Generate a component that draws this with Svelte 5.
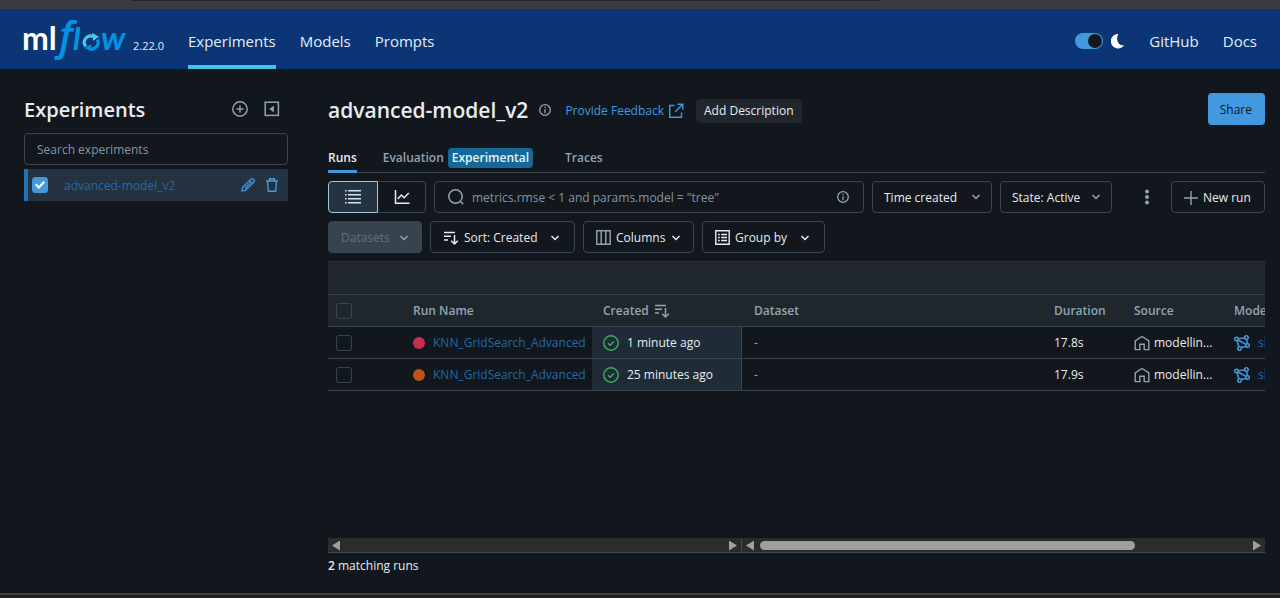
<script>
  let dark = $state(true);
  let experimentChecked = $state(true);
  let view = $state('list');

  const runs = [
    { name: 'KNN_GridSearch_Advanced', color: '#c82c4f', created: '1 minute ago', duration: '17.8s', source: 'modellin...', model: 'sklearn' },
    { name: 'KNN_GridSearch_Advanced', color: '#be501e', created: '25 minutes ago', duration: '17.9s', source: 'modellin...', model: 'sklearn' }
  ];
</script>

{#snippet chevron()}
  <svg class="chevron" width="10" height="10" viewBox="0 0 10 10" aria-hidden="true"><path d="M1.5 3 5 6.5 8.5 3" fill="none" stroke="currentColor" stroke-width="1.5" /></svg>
{/snippet}

{#snippet info()}
  <svg width="14" height="14" viewBox="0 0 14 14" aria-hidden="true"><circle cx="7" cy="7" r="5.3" fill="none" stroke="currentColor" stroke-width="1.3" /><path d="M7 6.2v4M7 3.7v1.4" stroke="currentColor" stroke-width="1.3" /></svg>
{/snippet}

{#snippet sortIcon()}
  <svg width="16" height="16" viewBox="0 0 16 16" fill="none" stroke="currentColor" stroke-width="1.5" aria-hidden="true"><path d="M1 2.5h11M1 6.3h7M1 10h4M11.5 5v9M8.2 10.8l3.3 3.2 3.3-3.2" /></svg>
{/snippet}

<div class="page">
  <div class="window-edge"><div class="address-edge"></div></div>

  <header>
    <a class="brand" href="#home" aria-label="mlflow 2.22.0">
      <svg class="logo" width="105" height="44" viewBox="0 0 105 44" aria-hidden="true">
        <text class="ml" x="-2" y="33">ml</text>
        <text class="f" x="35" y="33">f</text>
        <text class="l" x="49" y="33">l</text>
        <g fill="none" stroke="#43c9ed" stroke-width="3.2">
          <path d="M61.8 29.5A6.4 6.4 0 0 1 69 19.4" />
          <path d="M73.3 22.5A6.4 6.4 0 0 1 65.5 31.6" stroke="#0194e2" />
        </g>
        <path d="M68 15.8 75 19.8 69.2 23.8Z" fill="#43c9ed" />
        <path d="M67.2 27.3 60.8 31 67.4 34.6Z" fill="#0194e2" />
        <text class="w" x="77" y="33">w</text>
      </svg>
      <span class="version">2.22.0</span>
    </a>
    <nav>
      <a class="active" href="#experiments">Experiments</a>
      <a href="#models">Models</a>
      <a href="#prompts">Prompts</a>
    </nav>
    <div class="links">
      <label class="theme">
        <input type="checkbox" role="switch" aria-label="Dark theme" bind:checked={dark} />
        <svg width="14" height="16" viewBox="0 0 14 16" aria-hidden="true"><path d="M7.4 1A7.2 7.2 0 1 0 13 12.2C7.6 13.3 4 6.2 7.4 1Z" fill="#fff" /></svg>
      </label>
      <a href="#github">GitHub</a>
      <a href="#docs">Docs</a>
    </div>
  </header>

  <div class="body">
    <aside>
      <div class="side-title">
        <h2>Experiments</h2>
        <button class="plain" aria-label="New experiment">
          <svg width="16" height="16" viewBox="0 0 16 16" fill="none" stroke="currentColor" stroke-width="1.4" aria-hidden="true"><circle cx="8" cy="8" r="7.2" /><path d="M8 4.5v7M4.5 8h7" /></svg>
        </button>
        <button class="plain" aria-label="Hide sidebar">
          <svg width="16" height="16" viewBox="0 0 16 16" aria-hidden="true"><rect x="1.2" y="1.2" width="13.2" height="13.2" fill="none" stroke="currentColor" stroke-width="1.5" /><path d="M9.8 4.8v6.4L5.2 8Z" fill="currentColor" /></svg>
        </button>
      </div>
      <input class="side-search" type="text" placeholder="Search experiments" aria-label="Search experiments" />
      <div class="experiment">
        <input class="box" type="checkbox" aria-label="Select advanced-model_v2" bind:checked={experimentChecked} />
        <a href="#advanced-model_v2">advanced-model_v2</a>
        <button class="plain" aria-label="Rename">
          <svg width="16" height="16" viewBox="0 0 16 16" fill="none" stroke="currentColor" stroke-width="1.3" aria-hidden="true"><path d="M2 14l.6-3.6 8.3-8.3a1.6 1.6 0 0 1 2.3 0l.6.6a1.6 1.6 0 0 1 0 2.3l-8.3 8.3ZM9.4 3.6l2.9 2.9M4.8 11.2l5.6-5.6" /></svg>
        </button>
        <button class="plain" aria-label="Delete">
          <svg width="16" height="16" viewBox="0 0 16 16" fill="none" stroke="currentColor" stroke-width="1.4" aria-hidden="true"><path d="M2 4h12M5.5 4V1.7h5V4M3.5 4l.8 10.3h7.4L12.5 4" /></svg>
        </button>
      </div>
    </aside>

    <main>
      <div class="title">
        <h1>advanced-model_v2</h1>
        <span class="muted">{@render info()}</span>
        <a class="feedback" href="#feedback">
          Provide Feedback
          <svg width="16" height="16" viewBox="0 0 16 16" fill="none" stroke="currentColor" stroke-width="1.4" aria-hidden="true"><path d="M6.5 2.5H1.7v11.8h11.8V9.5M9.5 1.2h5.2v5.2M14.5 1.4 7 9" /></svg>
        </a>
        <button class="describe">Add Description</button>
        <button class="share">Share</button>
      </div>

      <div class="tabs" role="tablist">
        <button role="tab" class="on" aria-selected="true">Runs</button>
        <button role="tab" aria-selected="false">Evaluation <span class="tag">Experimental</span></button>
        <button role="tab" aria-selected="false">Traces</button>
      </div>

      <div class="bar">
        <div class="views">
          <button class:on={view === 'list'} aria-label="List view" onclick={() => (view = 'list')}>
            <svg width="18" height="14" viewBox="0 0 18 14" fill="currentColor" aria-hidden="true"><path d="M4 0h13v1.5H4zM4 4h13v1.5H4zM4 8h13v1.5H4zM4 12h13v1.5H4zM1 0h1.6v1.5H1zM1 4h1.6v1.5H1zM1 8h1.6v1.5H1zM1 12h1.6v1.5H1z" /></svg>
          </button>
          <button class:on={view === 'chart'} aria-label="Chart view" onclick={() => (view = 'chart')}>
            <svg width="16" height="16" viewBox="0 0 16 16" fill="none" stroke="currentColor" stroke-width="1.5" aria-hidden="true"><path d="M1.5 1v13.2h14M3.8 10l3.5-4 2.8 2.7L14.8 4" /></svg>
          </button>
        </div>
        <div class="query">
          <svg width="18" height="18" viewBox="0 0 18 18" fill="none" stroke="currentColor" stroke-width="1.5" aria-hidden="true"><circle cx="8.5" cy="8.5" r="6.7" /><path d="m13.2 13.2 3 3" /></svg>
          <input type="text" aria-label="Search runs" placeholder={'metrics.rmse < 1 and params.model = "tree"'} />
          {@render info()}
        </div>
        <div class="select time">
          <select aria-label="Time created"><option>Time created</option></select>
          {@render chevron()}
        </div>
        <div class="select state">
          <select aria-label="State"><option>State: Active</option></select>
          {@render chevron()}
        </div>
        <button class="plain more" aria-label="More actions">
          <svg width="6" height="16" viewBox="0 0 6 16" fill="currentColor" aria-hidden="true"><circle cx="3" cy="2.6" r="2" /><circle cx="3" cy="8" r="2" /><circle cx="3" cy="13.4" r="2" /></svg>
        </button>
        <button class="btn new">
          <svg class="muted" width="14" height="14" viewBox="0 0 14 14" stroke="currentColor" stroke-width="1.4" aria-hidden="true"><path d="M7 0v14M0 7h14" /></svg>
          New run
        </button>
      </div>

      <div class="bar second">
        <button class="btn datasets" disabled>Datasets {@render chevron()}</button>
        <button class="btn sort">{@render sortIcon()} Sort: Created {@render chevron()}</button>
        <button class="btn columns">
          <svg class="muted" width="15" height="15" viewBox="0 0 15 15" fill="none" stroke="currentColor" stroke-width="1.4" aria-hidden="true"><path d="M.8.8h13.4v13.4H.8ZM5.2.8v13.4M9.8.8v13.4" /></svg>
          Columns {@render chevron()}
        </button>
        <button class="btn group">
          <svg width="15" height="15" viewBox="0 0 15 15" fill="none" stroke="currentColor" stroke-width="1.4" aria-hidden="true"><path d="M.8.8h13.4v13.4H.8ZM3 4.5h1.8M3 7.5h1.8M3 10.5h1.8M6.2 4.5H12M6.2 7.5H12M6.2 10.5H12" /></svg>
          Group by {@render chevron()}
        </button>
      </div>

      <div class="grid">
        <table>
          <colgroup>
            <col class="c-check" /><col class="c-name" /><col class="c-created" /><col class="c-dataset" />
            <col class="c-duration" /><col class="c-source" /><col class="c-models" />
          </colgroup>
          <thead>
            <tr class="groups"><td colspan="7"></td></tr>
            <tr>
              <th><input class="box" type="checkbox" aria-label="Select all runs" /></th>
              <th>Run Name</th>
              <th><span class="cell">Created {@render sortIcon()}</span></th>
              <th>Dataset</th>
              <th>Duration</th>
              <th>Source</th>
              <th>Models</th>
            </tr>
          </thead>
          <tbody>
            {#each runs as run}
              <tr>
                <td><input class="box" type="checkbox" aria-label="Select run" /></td>
                <td><span class="cell"><i class="dot" style:background={run.color}></i><a href="#run">{run.name}</a></span></td>
                <td class="sorted">
                  <span class="cell">
                    <svg class="ok" width="16" height="16" viewBox="0 0 16 16" fill="none" stroke="currentColor" stroke-width="1.5" aria-hidden="true"><circle cx="8" cy="8" r="7.2" /><path d="m5 8.2 2.2 2.1L11 6.4" /></svg>
                    {run.created}
                  </span>
                </td>
                <td class="muted">-</td>
                <td>{run.duration}</td>
                <td>
                  <span class="cell tight">
                    <svg class="muted" width="16" height="16" viewBox="0 0 16 16" fill="none" stroke="currentColor" stroke-width="1.4" aria-hidden="true"><path d="M1.2 5.8 8 1.5l6.8 4.3v8.8H10.2V9.2H5.8v5.4H1.2Z" /></svg>
                    {run.source}
                  </span>
                </td>
                <td>
                  <span class="cell">
                    <svg class="model" width="16" height="16" viewBox="0 0 16 16" fill="none" stroke="currentColor" stroke-width="1.5" aria-hidden="true"><circle cx="2.4" cy="4" r="1.7" /><circle cx="12.4" cy="2.6" r="1.8" /><circle cx="13.6" cy="10.5" r="1.8" /><circle cx="5.5" cy="13.6" r="1.8" /><path d="M4.2 3.8 10.4 3M3 5.7l1.9 6M12.7 4.5l.6 4.1M7.3 12.8l4.4-1.6M4 5l8 4.4" /></svg>
                    <a href="#model">{run.model}</a>
                  </span>
                </td>
              </tr>
            {/each}
          </tbody>
        </table>
      </div>

      <div class="scrolls" aria-hidden="true">
        <div class="pinned"><i class="left"></i><i class="right"></i></div>
        <div class="free"><i class="left"></i><div class="track"><div class="thumb"></div></div><i class="right"></i></div>
      </div>
      <p><b>2</b> matching runs</p>
    </main>
  </div>
  <div class="bottom-edge"></div>
</div>

<style>
  :global(body) {
    margin: 0;
    background: #11171c;
  }
  .page {
    min-height: 100vh;
    display: flex;
    flex-direction: column;
    background: #11171c;
    color: #e8ecf0;
    font: 12px/20px 'Open Sans', 'Noto Sans', sans-serif;
  }
  .page, .page * { box-sizing: border-box; }
  svg { display: block; flex: none; }
  a { color: #2668a5; text-decoration: none; }
  button, input, select { font: inherit; color: inherit; }
  button { white-space: nowrap; }
  .muted { color: #92a4b3; }

  .window-edge {
    height: 9px;
    padding: 0 400px 0 132px;
    background: #3a3b41;
  }
  .address-edge {
    height: 1px;
    background: #25262c;
  }
  .bottom-edge {
    height: 5px;
    background: #221f1f;
    border-top: 2px solid #414143;
  }

  header {
    height: 60px;
    padding: 0 23px 0 24px;
    display: flex;
    align-items: center;
    background: #0b3574;
  }
  header a {
    color: #e3edf9;
    font-size: 15px;
  }
  .brand {
    width: 164px;
    display: flex;
    align-items: center;
    gap: 4px;
  }
  .logo { overflow: visible; }
  .logo text { fill: #0194e2; }
  .logo .ml { fill: #fff; font: 700 32px Lato, sans-serif; }
  .logo .f { font: italic 600 40px 'Open Sans', sans-serif; }
  .logo .l { font: italic 700 31px Lato, sans-serif; }
  .logo .w { font: italic 700 33px Lato, sans-serif; }
  .version {
    font-size: 11px;
    padding-top: 14px;
  }
  nav {
    align-self: stretch;
    display: flex;
    gap: 24px;
  }
  nav a {
    padding-top: 4px;
    line-height: 56px;
    border-bottom: 4px solid transparent;
    height: 60px;
  }
  nav .active { border-color: #43c3e8; }
  .links {
    margin-left: auto;
    display: flex;
    align-items: center;
    gap: 24px;
    padding-top: 4px;
  }
  .theme {
    display: flex;
    align-items: center;
    gap: 8px;
  }
  .theme input {
    appearance: none;
    width: 28px;
    height: 16px;
    margin: 0;
    padding: 1px;
    border-radius: 8px;
    background: #4299e0;
    display: flex;
  }
  .theme input::after {
    content: '';
    width: 14px;
    height: 14px;
    border-radius: 7px;
    background: #11171c;
  }
  .theme input:checked { justify-content: flex-end; }

  .body {
    flex: 1;
    display: flex;
    gap: 40px;
    padding: 24px 15px 17px 24px;
  }
  aside {
    width: 264px;
    flex: none;
  }
  h1, h2 {
    margin: 0;
    font-size: 20px;
    line-height: 32px;
    font-weight: 600;
  }
  h1 { font-size: 21px; }
  h1, h2 { padding-top: 2px; }
  .side-title {
    display: flex;
    align-items: center;
    gap: 16px;
    height: 32px;
    padding-right: 8px;
    margin-bottom: 8px;
  }
  .side-title h2 { flex: 1; }
  .plain {
    display: flex;
    justify-content: center;
    padding: 0;
    border: 0;
    background: none;
    color: #92a4b3;
  }
  .side-search {
    width: 100%;
    height: 32px;
    padding: 0 12px;
    border: 1px solid #37444f;
    border-radius: 4px;
    background: none;
  }
  ::placeholder { color: #8396a5; opacity: 1; }
  .experiment {
    height: 32px;
    margin-top: 4px;
    padding: 0 8px 0 4px;
    display: flex;
    align-items: center;
    gap: 8px;
    border-left: 4px solid #2272b4;
    background: #24333f;
  }
  .experiment a {
    flex: 1;
    padding: 1px 0 0 8px;
  }
  .experiment .plain { color: #4299e0; }
  .box {
    appearance: none;
    width: 16px;
    height: 16px;
    margin: 0;
    flex: none;
    display: grid;
    place-items: center;
    border: 1px solid #37444f;
    border-radius: 3px;
  }
  .box:checked {
    border-color: #4299e0;
    background: #4299e0;
  }
  .box:checked::after {
    content: '';
    width: 10px;
    height: 8px;
    background: #fff;
    clip-path: polygon(0 50%, 15% 32%, 38% 62%, 85% 0, 100% 18%, 38% 100%);
  }

  main {
    flex: 1;
    min-width: 0;
    display: flex;
    flex-direction: column;
  }
  .title {
    display: flex;
    align-items: center;
    height: 32px;
  }
  .title .muted {
    margin: 0 13px 0 10px;
    padding-top: 2px;
  }
  .feedback {
    display: flex;
    align-items: center;
    gap: 4px;
    padding-top: 3px;
    color: #4299e0;
  }
  .describe {
    margin: 3px 0 0 12px;
    height: 24px;
    padding: 0 8px;
    border: 0;
    border-radius: 4px;
    background: #1f272d;
  }
  .share {
    margin-left: auto;
    height: 32px;
    padding: 1px 13px 0 12px;
    border: 0;
    border-radius: 4px;
    background: #4299e0;
    color: #11171c;
  }

  .tabs {
    height: 32px;
    margin: 16px 0 8px;
    display: flex;
    gap: 26px;
    border-bottom: 1px solid #37444f;
  }
  .tabs button {
    display: flex;
    align-items: center;
    gap: 4px;
    height: 32px;
    padding: 4px 0 0;
    border: 0;
    border-bottom: 3px solid transparent;
    background: none;
    color: #92a4b3;
    font-weight: 600;
  }
  .tabs .on {
    color: #e8ecf0;
    border-color: #4299e0;
  }
  .tag {
    margin-right: 6px;
    padding: 0 4px;
    border-radius: 4px;
    background: #14699a;
    color: #e8f4fb;
  }

  .bar {
    display: flex;
    gap: 8px;
  }
  .second { margin: 8px 0; }
  .views { display: flex; }
  .views button {
    width: 48px;
    height: 32px;
    padding: 0;
    display: grid;
    place-items: center;
    border: 1px solid #37444f;
    border-left: 0;
    border-radius: 0 4px 4px 0;
    background: none;
  }
  .views button:first-child {
    width: 50px;
    border: 1px solid #37444f;
    border-radius: 4px 0 0 4px;
  }
  .views .on, .views .on:first-child {
    border-color: #a4c6dd;
    background: #24333f;
    color: #cfe5f5;
  }
  .query {
    flex: 1;
    min-width: 0;
    height: 32px;
    display: flex;
    align-items: center;
    gap: 7px;
    padding: 0 13px 0 12px;
    border: 1px solid #37444f;
    border-radius: 4px;
    color: #92a4b3;
  }
  .query input {
    flex: 1;
    min-width: 0;
    padding: 1px 0 0;
    border: 0;
    background: none;
  }
  .select {
    display: grid;
    align-items: center;
    color: #e8ecf0;
  }
  .select > :global(*) { grid-area: 1 / 1; }
  .select .chevron {
    justify-self: end;
    margin-right: 11px;
    pointer-events: none;
    color: #92a4b3;
  }
  .time { width: 120px; }
  .state { width: 112px; }
  select {
    appearance: none;
    width: 100%;
    height: 32px;
    padding: 1px 11px 0;
    border: 1px solid #37444f;
    border-radius: 4px;
    background: none;
  }
  .more {
    width: 32px;
    margin-left: 11px;
    align-items: center;
  }
  .btn {
    height: 32px;
    padding: 1px 12px 0;
    display: flex;
    align-items: center;
    gap: 5px;
    border: 1px solid #37444f;
    border-radius: 4px;
    background: none;
  }
  .btn .chevron { margin-left: auto; }
  .new { width: 94px; }
  .datasets {
    width: 94px;
    border-color: #37444f;
    background: #37444f;
    color: #5f7281;
  }
  .datasets .chevron { color: #92a4b3; }
  .sort { width: 145px; }
  .columns { width: 111px; }
  .group { width: 123px; }
  .sort .chevron, .group .chevron { margin-right: 2px; }

  .grid {
    flex: 1;
    overflow: hidden;
  }
  table {
    width: 1044px;
    table-layout: fixed;
    border-spacing: 0;
  }
  .c-check { width: 73px; }
  .c-name { width: 191px; }
  .c-created { width: 150px; }
  .c-dataset { width: 300px; }
  .c-duration { width: 80px; }
  .c-source { width: 100px; }
  .c-models { width: 150px; }
  td, th {
    height: 32px;
    padding: 0 0 0 12px;
    border-bottom: 1px solid #37444f;
    text-align: left;
    white-space: nowrap;
  }
  td:first-child, th:first-child { padding-left: 8px; }
  td .box, th .box { vertical-align: middle; }
  th {
    color: #92a4b3;
    font-weight: 600;
  }
  thead { background: #1f272d; }
  .groups td {
    height: 34px;
    border-top: 1px solid #2c363e;
  }
  .sorted {
    background: #1f2b36;
    border-right: 1px solid #37444f;
  }
  td.sorted, th:nth-child(3) { padding-left: 11px; }
  .cell {
    display: flex;
    align-items: center;
    gap: 8px;
  }
  th .cell { gap: 5px; }
  .tight { gap: 4px; }
  .dot {
    width: 12px;
    height: 12px;
    border-radius: 6px;
  }
  .ok { color: #3caa60; }
  .model { color: #4299e0; }

  .scrolls {
    display: flex;
    height: 15px;
    border-bottom: 1px solid #414a50;
    background: #2c2c2c;
  }
  .pinned, .free {
    display: flex;
    align-items: center;
    justify-content: space-between;
    padding: 1px 4px 0;
  }
  .pinned {
    width: 414px;
    flex: none;
    border-right: 1px solid #414a50;
  }
  .free { flex: 1; }
  .left, .right {
    width: 8px;
    height: 10px;
    background: #9f9f9f;
    clip-path: polygon(0 50%, 100% 0, 100% 100%);
  }
  .right { clip-path: polygon(0 0, 100% 50%, 0 100%); }
  .track {
    flex: 1;
    padding: 0 6px;
  }
  .thumb {
    width: 77%;
    height: 9px;
    border-radius: 5px;
    background: #9f9f9f;
  }
  p { margin: 3px 0 0; }
  p b { font-weight: 600; }
</style>
